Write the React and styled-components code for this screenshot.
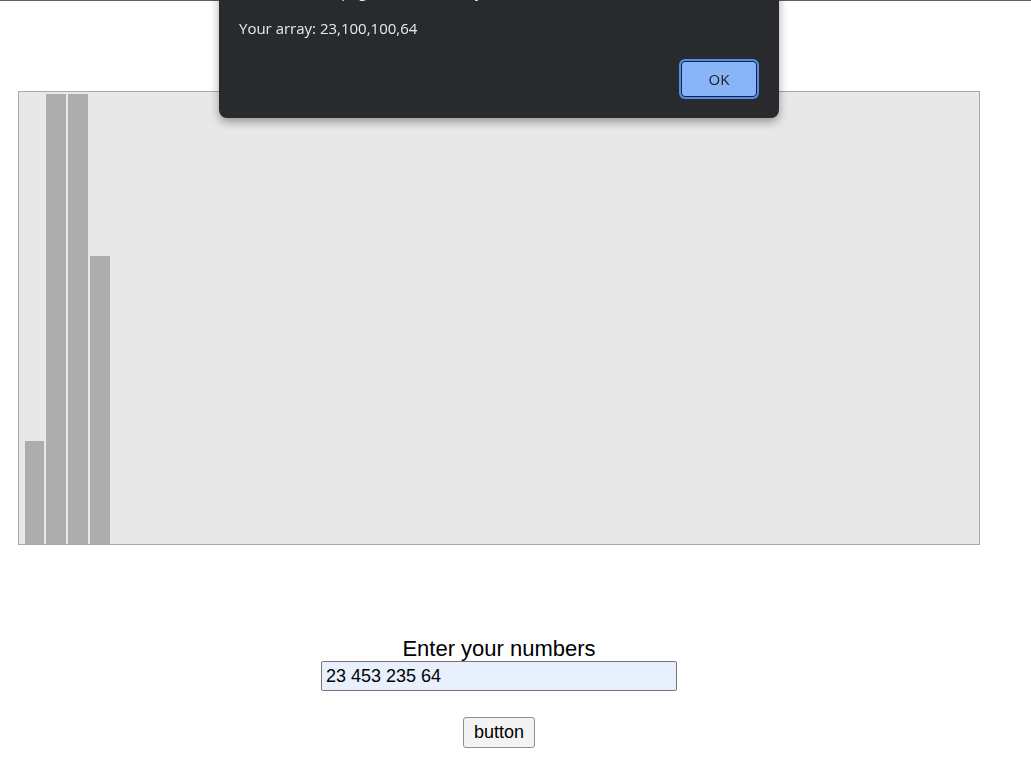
import { useState } from "react"
import styled, { createGlobalStyle } from "styled-components"

const GlobalStyle = createGlobalStyle`
    html {
        border-top: 1px solid #5f5f5f;
    }
    body {
        margin: 8px;
        background: #ffffff;
        font-family: 'Liberation Sans', Arial, sans-serif;
    }
`

export default function App() {

    const [numbers, setNumbers] = useState("23 453 235 64")
    const values = [23, 100, 100, 64]

    return (
        <>
            <GlobalStyle />
            <PageContainer>
                <ChartContainer>
                    {values.map((el, i) => <Bar key={i} style={{ height: `${el * 4.5}px` }} />)}
                </ChartContainer>

                <FormContainer>
                    <Label htmlFor="numbers">Enter your numbers</Label>
                    <NumberInput id="numbers" value={numbers} onChange={(e) => setNumbers(e.target.value)} />
                    <SubmitButton>button</SubmitButton>
                </FormContainer>
            </PageContainer>

            <AlertBox>
                <AlertTitle>An embedded page on this site says</AlertTitle>
                <AlertMessage>Your array: {values.join(",")}</AlertMessage>
                <AlertActions>
                    <OkButton>OK</OkButton>
                </AlertActions>
            </AlertBox>
        </>
    )
}

const PageContainer = styled.div`
    width: 962px;
    margin: 82px 0 0 10px;
`
const ChartContainer = styled.div`
    box-sizing: border-box;
    height: 454px;
    border: 1px solid #a9a9a9;
    background-color: #e8e8e8;
    display: flex;
    flex-direction: row;
    align-items: flex-end;
    gap: 2px;
    padding-left: 6px;
`
const Bar = styled.div`
    width: 20px;
    background-color: #adadad;
    &:first-child {
        width: 19px;
    }
`
const FormContainer = styled.div`
    display: flex;
    flex-direction: column;
    align-items: center;
    margin-top: 91px;
`
const Label = styled.label`
    font-size: 22px;
    color: #000000;
    line-height: 25px;
`
const NumberInput = styled.input`
    box-sizing: border-box;
    width: 356px;
    height: 30px;
    padding: 0 4px;
    font-family: 'Liberation Sans', Arial, sans-serif;
    font-size: 18px;
    color: #000000;
    background-color: #e8f0fe;
    border: 1px solid #767676;
    border-radius: 2px;
    outline: none;
`
const SubmitButton = styled.button`
    box-sizing: border-box;
    margin-top: 26px;
    height: 31px;
    padding: 0 10px;
    font-family: 'Liberation Sans', Arial, sans-serif;
    font-size: 18px;
    color: #000000;
    background-color: #f3f3f3;
    border: 1px solid #8f8f8f;
    border-radius: 3px;
`
const AlertBox = styled.div`
    position: fixed;
    top: -19px;
    left: 219px;
    box-sizing: border-box;
    width: 560px;
    padding: 0 22px 21px 20px;
    background-color: #292a2d;
    border-radius: 0 0 8px 8px;
    box-shadow: 0 4px 10px rgba(0, 0, 0, 0.35);
    font-family: 'Open Sans', 'Noto Sans', sans-serif;
    color: #e8eaed;
`
const AlertTitle = styled.div`
    font-size: 15px;
    line-height: 20px;
`
const AlertMessage = styled.div`
    margin-top: 17px;
    font-size: 15px;
    line-height: 20px;
`
const AlertActions = styled.div`
    display: flex;
    justify-content: flex-end;
    margin-top: 23px;
`
const OkButton = styled.button`
    box-sizing: border-box;
    width: 76px;
    height: 36px;
    background-color: #8ab4f8;
    color: #202124;
    font-family: 'Open Sans', 'Noto Sans', sans-serif;
    font-size: 15px;
    border: 1px solid #202124;
    border-radius: 4px;
    box-shadow: 0 0 0 2px #4c8df6;
    outline: none;
    padding: 0;
`
